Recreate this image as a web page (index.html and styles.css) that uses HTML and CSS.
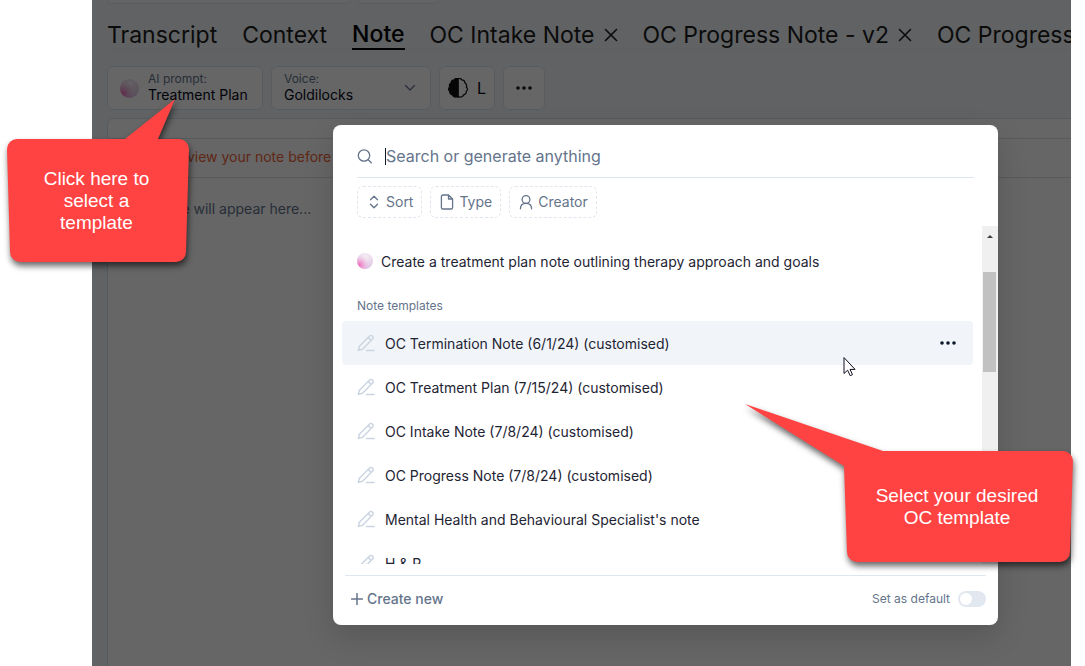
FILE: index.html
```html
<!DOCTYPE html>
<html lang="en">
<head>
<meta charset="utf-8">
<title>Note templates</title>
<link rel="stylesheet" href="styles.css">
</head>
<body>
<svg class="defs" aria-hidden="true">
  <defs>
    <radialGradient id="orb" cx="0.55" cy="0.2" r="0.9">
      <stop offset="0" stop-color="#f6edf4"/><stop offset="0.45" stop-color="#ead9ec"/><stop offset="1" stop-color="#dcb9e3"/>
    </radialGradient>
    <radialGradient id="glow" cx="0.15" cy="0.75" r="0.6">
      <stop offset="0" stop-color="#f06dbb"/><stop offset="1" stop-color="#f3b5dc" stop-opacity="0"/>
    </radialGradient>
    <symbol id="ball" viewBox="0 0 16 16"><circle cx="8" cy="8" r="8" fill="url(#orb)"/><circle cx="8" cy="8" r="8" fill="url(#glow)"/></symbol>
    <symbol id="pen" viewBox="0 0 18 18"><path d="M1.400 16.400 2.400 12.200 12.600 2a1.900 1.900 0 0 1 2.700 0l.3.3a1.900 1.900 0 0 1 0 2.700L5.500 15.200 1.400 16.400ZM11.400 3.600l2.700 2.700M9.500 16.600h7.500"/></symbol>
    <symbol id="cross" viewBox="0 0 14 14"><path d="M1.500 1.500l11 11M12.500 1.500l-11 11"/></symbol>
    <symbol id="dots" viewBox="0 0 16 4"><circle cx="2" cy="2" r="1.8"/><circle cx="8" cy="2" r="1.8"/><circle cx="14" cy="2" r="1.8"/></symbol>
  </defs>
</svg>
<main class="app">
  <div class="strip"><div class="strip-main"></div><div class="strip-side"></div></div>
  <nav class="tabs">
    <button class="tab">Transcript</button>
    <button class="tab">Context</button>
    <button class="tab active">Note</button>
    <button class="tab">OC Intake Note <svg class="cross"><use href="#cross"/></svg></button>
    <button class="tab">OC Progress Note - v2 <svg class="cross"><use href="#cross"/></svg></button>
    <button class="tab">OC Progress</button>
  </nav>
  <div class="toolbar">
    <button class="tool prompt">
      <svg class="orb-large"><use href="#ball"/></svg>
      <span class="stack"><span class="caption">AI prompt:</span><span>Treatment Plan</span></span>
    </button>
    <button class="tool voice">
      <span class="stack"><span class="caption">Voice:</span><span>Goldilocks</span></span>
      <svg class="chevron" viewBox="0 0 12 8"><path d="M1.500 1.500 6 6l4.500-4.500"/></svg>
    </button>
    <button class="tool detail">
      <svg class="brain" viewBox="0 0 20 20"><path class="solid" d="M10 .8C8.500 0 6.800.7 6.200 1.900 4.300 1.800 3 3.200 3.100 4.900 1.500 5.700 1 7.600 1.700 9 .2 10.200.2 12.400 1.800 13.500c-.2 1.700.9 3.100 2.600 3.300.6 1.900 2.800 2.800 4.400 1.900l1.200.5Z"/><path d="M10 .8c1.500-.8 3.200-.1 3.800 1.100 1.900-.1 3.200 1.300 3.100 3 1.600.8 2.100 2.700 1.400 4.100 1.500 1.200 1.500 3.400-.1 4.500.2 1.700-.9 3.100-2.600 3.300-.6 1.900-2.800 2.800-4.400 1.900l-1.200.5Z"/></svg>
      <span>L</span>
    </button>
    <button class="tool more" aria-label="More"><svg class="dots"><use href="#dots"/></svg></button>
  </div>
  <section class="note">
    <p class="warning">Please review your note before use</p>
    <p class="empty">Your note will appear here...</p>
  </section>
  <div class="scrim"></div>

  <section class="modal" role="dialog" aria-label="Templates">
    <div class="search">
      <svg class="magnifier" viewBox="0 0 16 16"><circle cx="7" cy="7.500" r="5.700"/><path d="M11.200 11.700 14.300 14.800"/></svg>
      <span class="caret"></span>
      <input type="text" aria-label="Search" placeholder="Search or generate anything">
    </div>
    <div class="chips">
      <button class="chip"><svg class="chip-icon" viewBox="0 0 16 16"><path d="M4.500 5.800 8 2.200l3.500 3.600M4.500 10.200 8 13.800l3.500-3.600"/></svg>Sort</button>
      <button class="chip"><svg class="chip-icon" viewBox="0 0 16 16"><path d="M9.500 1H4a1.600 1.600 0 0 0-1.600 1.600v10.800A1.600 1.600 0 0 0 4 15h8a1.600 1.600 0 0 0 1.600-1.600V5L9.500 1v4h4"/></svg>Type</button>
      <button class="chip"><svg class="chip-icon" viewBox="0 0 16 16"><circle cx="8" cy="5.500" r="3.900"/><path d="M2.400 14.800c0-3.500 2.200-5.400 5.600-5.400s5.600 1.900 5.600 5.400"/></svg>Creator</button>
    </div>
    <div class="results">
      <div class="list">
        <button class="suggest"><svg class="orb-small"><use href="#ball"/></svg>Create a treatment plan note outlining therapy approach and goals</button>
        <h2 class="heading">Note templates</h2>
        <div class="row hover"><svg class="pen"><use href="#pen"/></svg><span class="name">OC Termination Note (6/1/24) (customised)</span><button class="row-more" aria-label="Options"><svg class="dots"><use href="#dots"/></svg></button></div>
        <div class="row"><svg class="pen"><use href="#pen"/></svg><span class="name">OC Treatment Plan (7/15/24) (customised)</span></div>
        <div class="row"><svg class="pen"><use href="#pen"/></svg><span class="name">OC Intake Note (7/8/24) (customised)</span></div>
        <div class="row"><svg class="pen"><use href="#pen"/></svg><span class="name">OC Progress Note (7/8/24) (customised)</span></div>
        <div class="row"><svg class="pen"><use href="#pen"/></svg><span class="name">Mental Health and Behavioural Specialist's note</span></div>
        <div class="row"><svg class="pen"><use href="#pen"/></svg><span class="name">H &amp; P</span></div>
      </div>
      <div class="scrollbar"><svg class="arrow" viewBox="0 0 8 4"><path d="M1 4 4 1l3 3z"/></svg><div class="thumb"></div></div>
    </div>
    <footer class="footer">
      <button class="create"><svg class="plus" viewBox="0 0 12 12"><path d="M6 .5v11M.5 6h11"/></svg>Create new</button>
      <label class="default">Set as default <input type="checkbox" class="switch"></label>
    </footer>
  </section>
</main>

<svg class="pointer" viewBox="0 0 13 20"><path d="M1 1v15.500l3.600-3.300 2.600 5.500 2.300-1-2.500-5.300h4.700Z"/></svg>
<aside class="callout first">
  <svg class="shape" viewBox="0 0 184 164"><path d="M119 40 169 0 152 40h21a10 10 0 0 1 10 10L180 153a10 10 0 0 1-10 10H14a10 10 0 0 1-10-10L1 50a10 10 0 0 1 10-10Z"/></svg>
  <p class="callout-text">Click here to<br>select a<br>template</p>
</aside>
<aside class="callout second">
  <svg class="shape" viewBox="0 0 330 160"><path d="M0 0 138 47H318a10 10 0 0 1 10 10L325 148a10 10 0 0 1-10 10H112a10 10 0 0 1-10-10L99 62Z"/></svg>
  <p class="callout-text">Select your desired<br>OC template</p>
</aside>
</body>
</html>
```
FILE: styles.css
```css
* { box-sizing: border-box; }
body { margin: 0; background: #fff; font-family: Inter, "Liberation Sans", sans-serif; position: relative; }
button { font: inherit; color: inherit; background: none; border: 0; padding: 0; margin: 0; text-align: left; }
p, h2 { margin: 0; }
svg { display: block; flex: none; fill: none; stroke-linecap: round; stroke-linejoin: round; }
.defs { position: absolute; width: 0; height: 0; }

.app { position: relative; margin: 0 14px 0 92px; padding-left: 15px; min-height: 100vh; display: flex; flex-direction: column; background: #f1f5f9; overflow: hidden; color: #0f172a; }
.scrim { position: absolute; inset: 0; background: rgba(0, 0, 0, 0.6); }

.strip { display: flex; gap: 8px; height: 4px; }
.strip div { border: 1px solid #e2e8f0; border-top: 0; border-radius: 0 0 6px 6px; background: #f8fafc; }
.strip-main { width: 243px; }
.strip-side { width: 80px; }

.tabs { display: flex; gap: 25px; height: 46px; padding-top: 14px; border-bottom: 1px solid #e8edf2; }
.tab { display: flex; align-items: center; gap: 9px; flex: none; height: 32px; padding-top: 2px; font-size: 23px; line-height: 30px; white-space: nowrap; color: #1c1c20; }
.tab.active { color: #000; font-weight: 500; border-bottom: 2px solid #000; }
.cross { width: 14px; height: 14px; stroke: #1c1c20; stroke-width: 1.6; }

.toolbar { display: flex; gap: 8px; padding: 16px 0 8px; }
.tool { display: flex; align-items: center; height: 44px; border: 1px solid #dde5ee; border-radius: 6px; background: #fff; font-size: 14px; line-height: 16px; color: #020617; }
.prompt { width: 156px; padding: 0 12px; gap: 9px; }
.voice { width: 160px; padding: 0 14px 0 12px; justify-content: space-between; }
.detail { width: 56px; padding: 0 8px; gap: 9px; font-size: 16px; }
.more { width: 42px; justify-content: center; }
.stack { display: flex; flex-direction: column; padding-bottom: 2px; white-space: nowrap; }
.caption { font-size: 12px; color: #64748b; }
.orb-large { width: 19px; height: 19px; }
.chevron { width: 12px; height: 8px; stroke: #64748b; stroke-width: 1.3; }
.brain { width: 20px; height: 20px; stroke: #0f0f12; stroke-width: 1.2; }
.brain .solid { fill: #0f0f12; }
.dots { width: 16px; height: 4px; fill: #0f172a; }

.note { flex: 1; padding-top: 19px; border: 1px solid #d9e4ee; border-right: 0; border-bottom: 0; border-radius: 6px 0 0; background: #fff; font-size: 14px; line-height: 20px; }
.warning { padding: 8px 18px 10px; border: solid #dce4ec; border-width: 1px 0; color: #f0623a; }
.empty { padding: 21px 18px; color: #64748b; }

.modal { position: absolute; top: 125px; left: 241px; right: 73px; border-radius: 8px; background: #fff; box-shadow: 0 12px 30px rgba(0, 0, 0, 0.15); overflow: hidden; }
.search { display: flex; align-items: center; height: 53px; margin: 0 24px; padding-top: 10px; border-bottom: 1px solid #dfe6ee; }
.magnifier { width: 16px; height: 16px; stroke: #64748b; stroke-width: 1.3; }
.caret { width: 1px; height: 17px; margin-left: 12px; background: #0f172a; }
.search input { flex: 1; min-width: 0; border: 0; outline: 0; padding: 0; background: none; font: inherit; font-size: 16px; line-height: 24px; color: #0f172a; }
.search input::placeholder { color: #64748b; opacity: 1; }
.chips { display: flex; gap: 8px; padding: 8px 24px; }
.chip { display: flex; align-items: center; gap: 4px; height: 32px; padding: 0 8px; border: 1px dashed #dfe6ee; border-radius: 6px; font-size: 14px; line-height: 16px; color: #64748b; }
.chip-icon { width: 16px; height: 16px; stroke: #64748b; stroke-width: 1.3; }

.results { display: flex; height: 338px; }
.list { flex: 1; padding: 13px 9px 0; overflow: hidden; font-size: 14px; color: #1e2433; }
.suggest { display: flex; align-items: center; gap: 8px; height: 44px; padding-left: 15px; }
.orb-small { width: 16px; height: 16px; }
.heading { padding: 15px 15px 7px; font-size: 12px; line-height: 16px; font-weight: 400; color: #64748b; }
.row { display: flex; align-items: center; gap: 10px; height: 44px; padding: 0 17px 0 15px; border-radius: 4px; }
.row.hover { background: #f1f5f9; }
.pen { width: 18px; height: 18px; stroke: #cbd5e1; stroke-width: 1.5; }
.name { flex: 1; }
.scrollbar { width: 16px; background: #f0f0f0; }
.arrow { width: 8px; height: 4px; margin: 8px 4px 34px; fill: #404040; }
.thumb { width: 13px; height: 100px; margin-left: 1px; background: #c1c1c1; }

.footer { display: flex; align-items: center; justify-content: space-between; height: 50px; margin: 11px 12px 0; padding: 0 0 4px 6px; border-top: 1px solid #dfe6ee; color: #64748b; }
.create { display: flex; align-items: center; gap: 4px; font-size: 14px; font-weight: 500; }
.plus { width: 12px; height: 12px; stroke: #64748b; stroke-width: 1.5; }
.default { display: flex; align-items: center; gap: 8px; font-size: 12px; }
.switch { appearance: none; width: 28px; height: 16px; margin: 0; padding: 2px; border-radius: 8px; background: #e2e8f0; }
.switch::before { content: ""; display: block; width: 12px; height: 12px; border-radius: 50%; background: #fff; }

.pointer { position: absolute; top: 357px; left: 843px; width: 13px; height: 20px; fill: #fff; stroke: #101020; stroke-width: 1; }
.callout { position: absolute; color: #fff; font-family: "Liberation Sans", Arial, sans-serif; font-size: 19px; line-height: 22px; text-align: center; }
.shape { fill: #ff4343; filter: drop-shadow(1px 4px 3px rgba(0, 0, 0, 0.6)); overflow: visible; }
.callout-text { position: absolute; }
.first { top: 99px; left: 6px; width: 184px; }
.first .callout-text { top: 69px; left: 0; right: 3px; }
.second { top: 404px; left: 745px; width: 330px; }
.second .callout-text { top: 81px; left: 97px; right: 3px; }
```
